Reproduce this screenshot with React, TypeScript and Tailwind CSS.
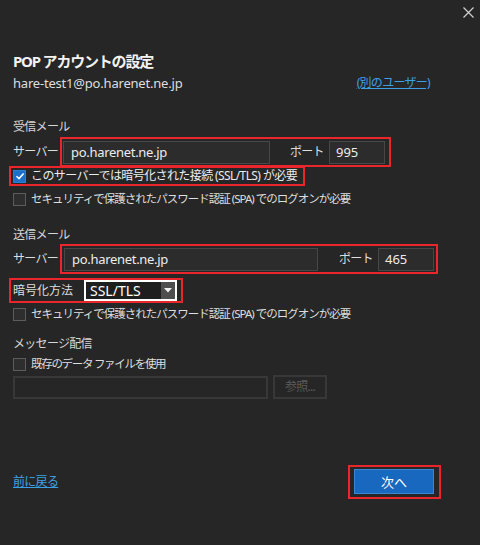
import React from "react";

const RED = "border-[#e8262b]";

function Box({ checked }: { checked?: boolean }) {
  if (checked) {
    return (
      <span className="w-[13px] h-[13px] bg-[#1d70c8] border border-[#2a7fd4] flex items-center justify-center shrink-0">
        <svg width="10" height="10" viewBox="0 0 10 10">
          <path d="M1.5 5.2 L4 7.6 L8.6 2.4" stroke="#fff" strokeWidth="1.5" fill="none" />
        </svg>
      </span>
    );
  }
  return <span className="w-[13px] h-[13px] bg-[#2e2e2e] border border-[#5c5c5c] shrink-0" />;
}

export default function App() {
  return (
    <div
      className="w-[480px] h-[545px] bg-[#262626] flex flex-col text-[#dedede] text-[12px] tracking-[-0.7px] leading-[20px] whitespace-nowrap overflow-hidden"
      style={{ fontFamily: '"Noto Sans", "Noto Sans CJK JP", sans-serif' }}
    >
      <div className="flex justify-end pt-[7px] pr-[6px] h-[18px]">
        <svg width="11" height="11" viewBox="0 0 11 11">
          <path d="M0.5 0.5 L10.5 10.5 M10.5 0.5 L0.5 10.5" stroke="#cfcfcf" strokeWidth="1.2" />
        </svg>
      </div>

      <div className="mt-[33px] pl-[13px] h-[20px] text-[15px] tracking-[-1.2px] font-bold text-[#f2f2f2]">
        POP アカウントの設定
      </div>

      <div className="mt-[2px] pl-[13px] pr-[50px] h-[20px] flex justify-between">
        <span className="text-[13px] tracking-[-0.2px]">hare-test1@po.harenet.ne.jp</span>
        <span className="text-[#3ea0e4] underline">(別のユーザー)</span>
      </div>

      <div className="mt-[24px] pl-[13px] h-[20px] text-[#d6d6d6]">受信メール</div>

      <div className="pl-[13px] flex items-center">
        <span className="w-[47px] shrink-0">サーバー</span>
        <div className={`border-2 ${RED} h-[30px] w-[331px] shrink-0 flex items-center pl-[1px]`}>
          <div className="w-[207px] h-[23px] shrink-0 bg-[#2c2c2c] border border-[#474747] flex items-center pl-[7px] text-[13px] tracking-[-0.3px] text-[#ececec]">
            po.harenet.ne.jp
          </div>
          <span className="ml-[20px] w-[30px] shrink-0">ポート</span>
          <div className="ml-[9px] w-[56px] h-[23px] shrink-0 bg-[#2c2c2c] border border-[#474747] flex items-center pl-[6px] text-[13px] tracking-normal text-[#ececec]">
            995
          </div>
        </div>
      </div>

      <div className={`mt-[-1px] ml-[9px] w-[296px] h-[20px] border-2 ${RED} flex items-center pl-[2px] gap-[5px]`}>
        <Box checked />
        <span className="text-[#ececec] tracking-[-0.6px]">このサーバーでは暗号化された接続 (SSL/TLS) が必要</span>
      </div>

      <div className="mt-[3px] pl-[13px] h-[20px] flex items-center gap-[5px]">
        <Box />
        <span className="text-[11.5px] tracking-[-1px]">セキュリティで保護されたパスワード認証 (SPA) でのログオンが必要</span>
      </div>

      <div className="mt-[16px] pl-[13px] h-[20px] text-[#d6d6d6]">送信メール</div>

      <div className="mt-[-1px] pl-[13px] flex items-center">
        <span className="w-[47px] shrink-0">サーバー</span>
        <div className={`border-2 ${RED} h-[30px] w-[378px] shrink-0 flex items-center pl-[2px]`}>
          <div className="w-[254px] h-[23px] shrink-0 bg-[#2c2c2c] border border-[#474747] flex items-center pl-[7px] text-[13px] tracking-[-0.3px] text-[#ececec]">
            po.harenet.ne.jp
          </div>
          <span className="ml-[21px] w-[30px] shrink-0">ポート</span>
          <div className="ml-[9px] w-[56px] h-[23px] shrink-0 bg-[#2c2c2c] border border-[#474747] flex items-center pl-[6px] text-[13px] tracking-normal text-[#ececec]">
            465
          </div>
        </div>
      </div>

      <div className={`mt-[4px] ml-[9px] w-[174px] h-[25px] border-2 ${RED} flex items-center pl-[2px]`}>
        <span className="w-[71px] shrink-0 tracking-normal">暗号化方法</span>
        <div className="w-[93px] h-[21px] shrink-0 border-2 border-white bg-[#1e1e1e] flex items-center">
          <span className="flex-1 pl-[4px] text-[14px] tracking-normal text-white leading-none">SSL/TLS</span>
          <span className="w-[14px] h-full bg-[#4e4e4e] flex items-center justify-center">
            <svg width="8" height="5" viewBox="0 0 8 5">
              <path d="M0 0 L8 0 L4 4.5 Z" fill="#f0f0f0" />
            </svg>
          </span>
        </div>
      </div>

      <div className="mt-[1px] pl-[13px] h-[20px] flex items-center gap-[5px]">
        <Box />
        <span className="text-[11.5px] tracking-[-1px]">セキュリティで保護されたパスワード認証 (SPA) でのログオンが必要</span>
      </div>

      <div className="mt-[10px] pl-[13px] h-[20px] text-[#d6d6d6]">メッセージ配信</div>

      <div className="pl-[13px] h-[20px] flex items-center gap-[5px]">
        <Box />
        <span className="text-[11.5px] tracking-[-1.3px]">既存のデータ ファイルを使用</span>
      </div>

      <div className="mt-[1px] pl-[13px] flex items-center gap-[5px]">
        <div className="w-[255px] h-[23px] border-2 border-[#383838]" />
        <div className="w-[54px] h-[24px] border-2 border-[#383838] flex items-center justify-center text-[#5a5a5a]">
          参照...
        </div>
      </div>

      <div className="mt-[66px] pl-[13px] pr-[39px] flex items-center justify-between">
        <span className="text-[#3ea0e4] underline">前に戻る</span>
        <div className={`border-2 ${RED} w-[93px] h-[34px] pl-[4px] pt-[2px]`}>
          <div className="w-[80px] h-[25px] bg-[#1768be] border border-[#3a86d2] flex items-center justify-center text-white text-[13px] tracking-normal">
            次へ
          </div>
        </div>
      </div>
    </div>
  );
}
